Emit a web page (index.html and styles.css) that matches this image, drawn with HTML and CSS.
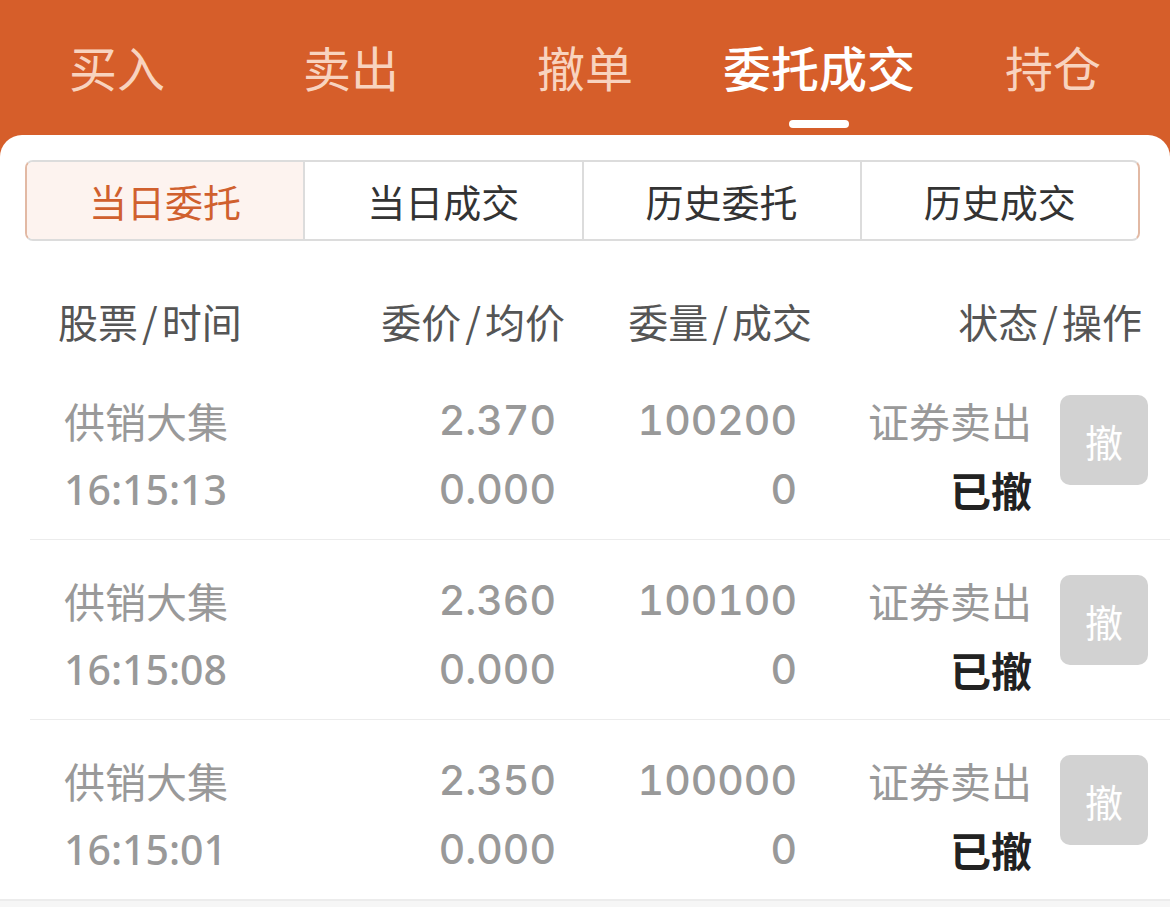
FILE: index.html
```html
<!DOCTYPE html>
<html lang="zh-CN">

<head>
    <meta charset="UTF-8">
    <meta name="viewport" content="width=device-width, initial-scale=1.0">
    <title>委托成交</title>
    <link rel="stylesheet" href="styles.css">
</head>

<body>
    <!-- 顶部交易导航 -->
    <nav class="topbar">
        <a href="#">买入</a>
        <a href="#">卖出</a>
        <a href="#">撤单</a>
        <a href="#" class="active">委托成交</a>
        <a href="#">持仓</a>
    </nav>

    <div class="card">
        <!-- 分段切换 -->
        <div class="segments">
            <div class="seg active">当日委托</div>
            <div class="seg">当日成交</div>
            <div class="seg">历史委托</div>
            <div class="seg">历史成交</div>
        </div>

        <!-- 表头 -->
        <div class="thead">
            <span>股票<i>/</i>时间</span>
            <span class="r">委价<i>/</i>均价</span>
            <span class="r">委量<i>/</i>成交</span>
            <span class="r">状态<i>/</i>操作</span>
        </div>

        <!-- 委托列表 -->
        <div class="row">
            <div class="cell"><span>供销大集</span><span class="time">16:15:13</span></div>
            <div class="cell r"><span class="num">2.370</span><span class="num">0.000</span></div>
            <div class="cell r"><span class="num">100200</span><span class="num">0</span></div>
            <div class="cell r"><span>证券卖出</span><span class="done">已撤</span></div>
            <button class="cancel">撤</button>
        </div>

        <div class="row">
            <div class="cell"><span>供销大集</span><span class="time">16:15:08</span></div>
            <div class="cell r"><span class="num">2.360</span><span class="num">0.000</span></div>
            <div class="cell r"><span class="num">100100</span><span class="num">0</span></div>
            <div class="cell r"><span>证券卖出</span><span class="done">已撤</span></div>
            <button class="cancel">撤</button>
        </div>

        <div class="row">
            <div class="cell"><span>供销大集</span><span class="time">16:15:01</span></div>
            <div class="cell r"><span class="num">2.350</span><span class="num">0.000</span></div>
            <div class="cell r"><span class="num">100000</span><span class="num">0</span></div>
            <div class="cell r"><span>证券卖出</span><span class="done">已撤</span></div>
            <button class="cancel">撤</button>
        </div>
    </div>
</body>

</html>
```

FILE: styles.css
```css
html {
    background-color: #f6f6f6;
}

body {
    margin: 0;
    padding: 0;
    font-family: "Noto Sans CJK SC", "Noto Sans", sans-serif;
    background: linear-gradient(#d65e2a 0, #d65e2a 200px, #f6f6f6 200px);
}

.topbar {
    display: flex;
    height: 135px;
}

.topbar a {
    flex: 1;
    text-align: center;
    color: #f8d3bf;
    text-decoration: none;
    font-size: 48px;
    line-height: 132px;
    position: relative;
}

.topbar a.active {
    color: #fff;
    font-weight: 500;
}

.topbar a.active::after {
    content: "";
    position: absolute;
    left: 50%;
    top: 120px;
    width: 60px;
    height: 8px;
    margin-left: -30px;
    background-color: #fff;
    border-radius: 4px;
}

.card {
    background-color: #fff;
    border-radius: 22px 22px 0 0;
    padding-top: 25px;
    height: 739px;
    border-bottom: 2px solid #ececec;
}

.segments {
    display: flex;
    margin: 0 30px 0 25px;
    height: 77px;
    border: 2px solid #dcdcdc;
    border-left-color: #e2b9a4;
    border-right-color: #e2b9a4;
    border-radius: 8px;
    overflow: hidden;
}

.seg {
    flex: 1;
    text-align: center;
    font-size: 38px;
    line-height: 77px;
    color: #333;
    border-left: 2px solid #dcdcdc;
}

.seg:first-child {
    border-left: none;
}

.seg.active {
    background-color: #fdf3ef;
    color: #d0602e;
}

.thead {
    display: grid;
    grid-template-columns: 307px 200px 247px 330px;
    margin: 41px 0 0 58px;
    height: 78px;
    line-height: 78px;
    font-size: 40px;
    color: #555;
}

.thead i {
    font-style: normal;
    margin: 0 4px;
}

.r {
    text-align: right;
}

.row {
    display: grid;
    grid-template-columns: 292px 200px 241px 235px 116px;
    align-items: center;
    margin-left: 30px;
    padding: 10px 0 0 34px;
    height: 169px;
    border-bottom: 1px solid #ececec;
}

.row:last-child {
    border-bottom: none;
}

.cell {
    display: flex;
    flex-direction: column;
    font-size: 41px;
    line-height: 69px;
    color: #999;
}

.cell.r {
    align-items: flex-end;
}

.num {
    font-family: Inter, "Noto Sans", sans-serif;
    font-variant-numeric: tabular-nums;
    font-weight: 500;
}

.time {
    font-family: "Noto Sans", sans-serif;
    font-weight: 500;
}

.done {
    color: #222;
    font-weight: bold;
}

.cancel {
    width: 88px;
    height: 90px;
    justify-self: end;
    align-self: start;
    margin-top: 25px;
    border: none;
    border-radius: 10px;
    background-color: #d2d2d2;
    color: #fff;
    font-family: "Noto Sans CJK SC", sans-serif;
    font-size: 38px;
    padding: 0;
}
```
